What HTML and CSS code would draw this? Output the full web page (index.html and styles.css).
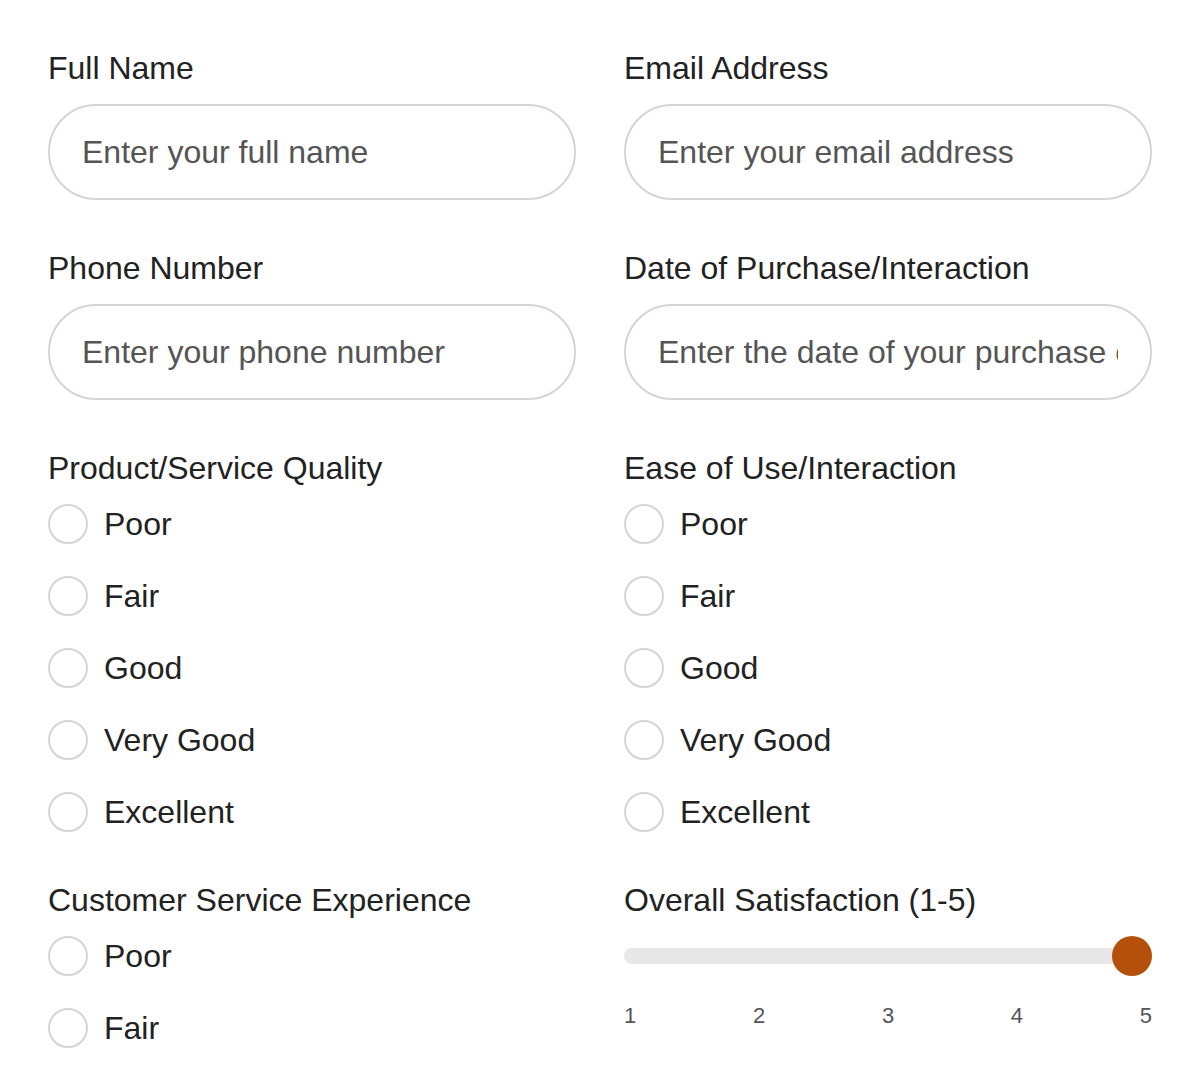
FILE: index.html
```html
<!DOCTYPE html>
<html lang="en">
<head>
<meta charset="utf-8">
<title>Feedback Form</title>
<link rel="stylesheet" href="styles.css">
</head>
<body>
<form class="form">
  <div class="field">
    <label class="label" for="name">Full Name</label>
    <input class="text-input" id="name" type="text" placeholder="Enter your full name">
  </div>
  <div class="field">
    <label class="label" for="email">Email Address</label>
    <input class="text-input" id="email" type="email" placeholder="Enter your email address">
  </div>
  <div class="field">
    <label class="label" for="phone">Phone Number</label>
    <input class="text-input" id="phone" type="tel" placeholder="Enter your phone number">
  </div>
  <div class="field">
    <label class="label" for="date">Date of Purchase/Interaction</label>
    <input class="text-input" id="date" type="text" placeholder="Enter the date of your purchase or interaction">
  </div>
  <div class="field">
    <span class="label">Product/Service Quality</span>
    <div class="options">
      <label class="option"><input class="radio" type="radio" name="q"><span>Poor</span></label>
      <label class="option"><input class="radio" type="radio" name="q"><span>Fair</span></label>
      <label class="option"><input class="radio" type="radio" name="q"><span>Good</span></label>
      <label class="option"><input class="radio" type="radio" name="q"><span>Very Good</span></label>
      <label class="option"><input class="radio" type="radio" name="q"><span>Excellent</span></label>
    </div>
  </div>
  <div class="field">
    <span class="label">Ease of Use/Interaction</span>
    <div class="options">
      <label class="option"><input class="radio" type="radio" name="e"><span>Poor</span></label>
      <label class="option"><input class="radio" type="radio" name="e"><span>Fair</span></label>
      <label class="option"><input class="radio" type="radio" name="e"><span>Good</span></label>
      <label class="option"><input class="radio" type="radio" name="e"><span>Very Good</span></label>
      <label class="option"><input class="radio" type="radio" name="e"><span>Excellent</span></label>
    </div>
  </div>
  <div class="field">
    <span class="label">Customer Service Experience</span>
    <div class="options">
      <label class="option"><input class="radio" type="radio" name="c"><span>Poor</span></label>
      <label class="option"><input class="radio" type="radio" name="c"><span>Fair</span></label>
      <label class="option"><input class="radio" type="radio" name="c"><span>Good</span></label>
      <label class="option"><input class="radio" type="radio" name="c"><span>Very Good</span></label>
      <label class="option"><input class="radio" type="radio" name="c"><span>Excellent</span></label>
    </div>
  </div>
  <div class="field">
    <label class="label" for="overall">Overall Satisfaction (1-5)</label>
    <input class="range" id="overall" type="range" min="1" max="5" step="1" value="5">
    <div class="ticks"><span>1</span><span>2</span><span>3</span><span>4</span><span>5</span></div>
  </div>
</form>
</body>
</html>
```
FILE: styles.css
```css
html, body {
  margin: 0;
  padding: 0;
  background: #ffffff;
}
body {
  font-family: "Liberation Sans", Arial, Helvetica, sans-serif;
  color: #222222;
}
.form {
  display: grid;
  grid-template-columns: 1fr 1fr;
  column-gap: 48px;
  row-gap: 48px;
  padding: 48px;
  align-items: start;
}
.field {
  display: flex;
  flex-direction: column;
  min-width: 0;
}
.label {
  font-size: 32px;
  line-height: 40px;
  color: #222222;
  margin-bottom: 16px;
}
.text-input {
  box-sizing: border-box;
  width: 100%;
  height: 96px;
  border: 2px solid #d4d4d4;
  border-radius: 48px;
  padding: 0 32px;
  font-family: inherit;
  font-size: 32px;
  color: #222222;
  background: #ffffff;
  outline: none;
}
.text-input::placeholder {
  color: #555555;
  opacity: 1;
}
.options {
  display: flex;
  flex-direction: column;
  gap: 32px;
}
.option {
  display: flex;
  align-items: center;
  gap: 16px;
  height: 40px;
  font-size: 32px;
  color: #222222;
}
.radio {
  appearance: none;
  -webkit-appearance: none;
  box-sizing: border-box;
  width: 40px;
  height: 40px;
  margin: 0;
  border: 2px solid #d4d4d4;
  border-radius: 50%;
  background: #ffffff;
  flex: none;
}
.range {
  -webkit-appearance: none;
  appearance: none;
  width: 100%;
  height: 40px;
  margin: 0;
  background: transparent;
}
.range::-webkit-slider-runnable-track {
  height: 16px;
  border-radius: 8px;
  background: #e8e8e8;
}
.range::-webkit-slider-thumb {
  -webkit-appearance: none;
  appearance: none;
  width: 40px;
  height: 40px;
  border-radius: 50%;
  background: #b5500b;
  border: none;
  margin-top: -12px;
}
.ticks {
  display: flex;
  justify-content: space-between;
  margin-top: 24px;
  font-size: 22px;
  line-height: 32px;
  color: #555555;
}
```
